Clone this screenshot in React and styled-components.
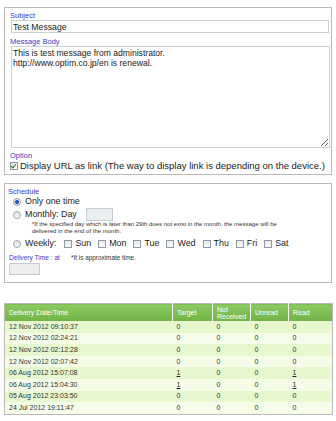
import React from 'react';
import styled, { createGlobalStyle } from 'styled-components';

const GlobalStyle = createGlobalStyle`
  html, body {
    margin: 0;
    padding: 0;
    background: #ffffff;
  }
  body {
    font-family: "Liberation Sans", Arial, sans-serif;
    color: #222;
  }
`;

const rows = [
  { date: '12 Nov 2012 09:10:37', target: '0', notReceived: '0', unread: '0', read: '0' },
  { date: '12 Nov 2012 02:24:21', target: '0', notReceived: '0', unread: '0', read: '0' },
  { date: '12 Nov 2012 02:12:28', target: '0', notReceived: '0', unread: '0', read: '0' },
  { date: '12 Nov 2012 02:07:42', target: '0', notReceived: '0', unread: '0', read: '0' },
  { date: '06 Aug 2012 15:07:08', target: '1', notReceived: '0', unread: '0', read: '1' },
  { date: '06 Aug 2012 15:04:30', target: '1', notReceived: '0', unread: '0', read: '1' },
  { date: '05 Aug 2012 23:03:50', target: '0', notReceived: '0', unread: '0', read: '0' },
  { date: '24 Jul 2012 19:11:47', target: '0', notReceived: '0', unread: '0', read: '0' },
];

const days = ['Sun', 'Mon', 'Tue', 'Wed', 'Thu', 'Fri', 'Sat'];

function Count({ value }) {
  return value === '0' ? value : <CountLink>{value}</CountLink>;
}

function App() {
  return (
    <Page>
      <GlobalStyle />
      <Panel $top={7} $pad="3px 4px 3px 5px">
        <Label>Subject</Label>
        <TextInput readOnly defaultValue="Test Message" />
        <Label $mt={4}>Message Body</Label>
        <TextArea
          readOnly
          defaultValue={'This is test message from administrator.\nhttp://www.optim.co.jp/en is renewal.'}
        />
        <Label $mt={3}>Option</Label>
        <CheckRow>
          <Check $checked />
          <span>Display URL as link (The way to display link is depending on the device.)</span>
        </CheckRow>
      </Panel>

      <Panel $top={8} $pad="3px 4px 7px 3px">
        <Label>Schedule</Label>
        <RadioRow>
          <Radio $checked />
          <span>Only one time</span>
        </RadioRow>
        <RadioRow $mt={1}>
          <Radio />
          <span>Monthly: Day</span>
          <DayBox />
        </RadioRow>
        <Note>
          *If the specified day which is later than 29th does not exist in the month, the message will be
          <br />
          delivered in the end of the month.
        </Note>
        <RadioRow $mt={3}>
          <Radio />
          <span>Weekly:</span>
          <Days>
            {days.map((d) => (
              <DayItem key={d}>
                <Check />
                <span>{d}</span>
              </DayItem>
            ))}
          </Days>
        </RadioRow>
        <TimeRow>
          <TimeLabel>Delivery Time : at</TimeLabel>
          <TimeNote>*It is approximate time.</TimeNote>
        </TimeRow>
        <TimeBox />
      </Panel>

      <Table>
        <colgroup>
          <col style={{ width: 168 }} />
          <col style={{ width: 40 }} />
          <col style={{ width: 38 }} />
          <col style={{ width: 38 }} />
          <col />
        </colgroup>
        <thead>
          <tr>
            <Th>Delivery Date/Time</Th>
            <Th>Target</Th>
            <Th>Not<br />Received</Th>
            <Th>Unread</Th>
            <Th>Read</Th>
          </tr>
        </thead>
        <tbody>
          {rows.map((r) => (
            <Row key={r.date}>
              <Td>{r.date}</Td>
              <Td><Count value={r.target} /></Td>
              <Td>{r.notReceived}</Td>
              <Td>{r.unread}</Td>
              <Td><Count value={r.read} /></Td>
            </Row>
          ))}
        </tbody>
      </Table>
    </Page>
  );
}

export default App;

const Page = styled.div`
  width: 336px;
  padding: 0 3px 4px 4px;
  box-sizing: border-box;
`;

const Panel = styled.div`
  margin-top: ${(p) => p.$top}px;
  width: 328px;
  box-sizing: border-box;
  border: 1px solid #b9b9b9;
  padding: ${(p) => p.$pad};
  display: flex;
  flex-direction: column;
`;

const Label = styled.div`
  font-size: 7.5px;
  line-height: 9px;
  color: #3b3bd0;
  margin-top: ${(p) => p.$mt || 0}px;
`;

const TextInput = styled.input`
  display: block;
  width: 318px;
  height: 13px;
  box-sizing: border-box;
  margin: 0 0 0 1px;
  padding: 0 1px;
  border: 1px solid #c6d2d6;
  font-family: "Liberation Sans", Arial, sans-serif;
  font-size: 8.7px;
  color: #222;
  outline: none;
  background: #fff;
`;

const TextArea = styled.textarea`
  display: block;
  width: 319px;
  height: 102px;
  box-sizing: border-box;
  margin: 0 0 0 1px;
  padding: 1px 1px;
  border: 1px solid #c6d2d6;
  font-family: "Liberation Sans", Arial, sans-serif;
  font-size: 8.6px;
  line-height: 10px;
  color: #222;
  outline: none;
  resize: both;
  background: #fff;
`;

const CheckRow = styled.div`
  display: flex;
  align-items: center;
  gap: 2px;
  font-size: 9.5px;
  line-height: 11px;
  color: #222;
  white-space: nowrap;
`;

const Check = styled.span`
  position: relative;
  flex: none;
  width: 6px;
  height: 6px;
  border: 1px solid #8f9aa2;
  background: linear-gradient(#e7e9ec, #fbfbfb);
  &::after {
    content: '';
    display: ${(p) => (p.$checked ? 'block' : 'none')};
    position: absolute;
    left: 1px;
    top: 0;
    width: 2px;
    height: 4px;
    border: solid #2b7a2b;
    border-width: 0 1.3px 1.3px 0;
    transform: rotate(40deg);
  }
`;

const RadioRow = styled.div`
  display: flex;
  align-items: center;
  gap: 3px;
  margin: ${(p) => p.$mt || 0}px 0 0 5px;
  min-height: 11px;
  font-size: 8.9px;
  line-height: 11px;
  color: #222;
`;

const Radio = styled.span`
  flex: none;
  width: 6px;
  height: 6px;
  border-radius: 50%;
  border: 1px solid #9aa4ac;
  background: ${(p) =>
    p.$checked
      ? 'radial-gradient(circle, #2a56b8 0 1.8px, #dfe7f0 2.2px)'
      : 'linear-gradient(#dde1e5, #fafafa)'};
  margin-right: 1px;
`;

const DayBox = styled.span`
  width: 27px;
  height: 13px;
  margin-left: 6px;
  box-sizing: border-box;
  border: 1px solid #c4cdd2;
  background: #ecedef;
`;

const Note = styled.div`
  margin: 0 0 0 24px;
  font-size: 6px;
  line-height: 7px;
  color: #333;
`;

const Days = styled.div`
  display: flex;
  gap: 7px;
  margin-left: 5px;
`;

const DayItem = styled.span`
  display: flex;
  align-items: center;
  gap: 3px;
`;

const TimeRow = styled.div`
  display: flex;
  align-items: center;
  gap: 11px;
  margin: 3px 0 0 1px;
  height: 10px;
`;

const TimeLabel = styled.span`
  font-size: 6.6px;
  color: #3b3bd0;
`;

const TimeNote = styled.span`
  font-size: 6.4px;
  color: #333;
`;

const TimeBox = styled.span`
  display: block;
  width: 31px;
  height: 12px;
  margin: 1px 0 0 1px;
  box-sizing: border-box;
  border: 1px solid #c4cdd2;
  background: #ecedef;
`;

const Table = styled.table`
  margin-top: 20px;
  width: 329px;
  border-collapse: collapse;
  border: 1px solid #b9b9b9;
  font-family: "Liberation Sans", Arial, sans-serif;
  font-size: 7px;
  table-layout: fixed;
`;

const Th = styled.th`
  height: 17px;
  padding: 0 4px;
  text-align: left;
  font-weight: normal;
  line-height: 7px;
  color: #fff;
  background: linear-gradient(#8ccb62, #70b345);
  border-left: 1px solid #ffffff;
  &:first-child {
    border-left: none;
  }
`;

const Row = styled.tr`
  background: #e7f8cf;
  &:nth-child(even) {
    background: #f5fde8;
  }
`;

const Td = styled.td`
  height: 11.6px;
  padding: 0 4px;
  line-height: 10px;
  color: #333;
  white-space: nowrap;
`;

const CountLink = styled.span`
  text-decoration: underline;
  color: #222;
`;
